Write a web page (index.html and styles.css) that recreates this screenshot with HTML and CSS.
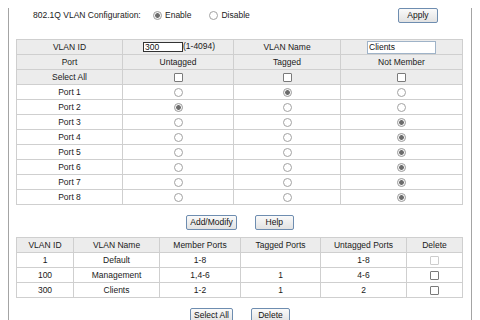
FILE: index.html
```html
<!DOCTYPE html>
<html lang="en">
<head>
    <meta charset="UTF-8">
    <title>802.1Q VLAN</title>
    <link rel="stylesheet" href="styles.css">
</head>
<body>
<div class="frame">
    <div class="config">
        <span class="config__label">802.1Q VLAN Configuration:</span>
        <label class="config__option"><input type="radio" name="mode" checked> Enable</label>
        <label class="config__option"><input type="radio" name="mode"> Disable</label>
        <button class="btn config__apply">Apply</button>
    </div>

    <table class="grid vlan-edit">
        <colgroup>
            <col style="width:106px">
            <col style="width:111px">
            <col style="width:107px">
            <col style="width:122px">
        </colgroup>
        <tr class="head">
            <td>VLAN ID</td>
            <td class="vlan-edit__id"><input class="field field--id" type="text" value="300">(1-4094)</td>
            <td>VLAN Name</td>
            <td><input class="field field--name" type="text" value="Clients"></td>
        </tr>
        <tr class="head">
            <td>Port</td>
            <td>Untagged</td>
            <td>Tagged</td>
            <td>Not Member</td>
        </tr>
        <tr class="head">
            <td>Select All</td>
            <td><input type="checkbox"></td>
            <td><input type="checkbox"></td>
            <td><input type="checkbox"></td>
        </tr>
        <tr><td>Port 1</td><td><input type="radio" name="p1"></td><td><input type="radio" name="p1" checked></td><td><input type="radio" name="p1"></td></tr>
        <tr><td>Port 2</td><td><input type="radio" name="p2" checked></td><td><input type="radio" name="p2"></td><td><input type="radio" name="p2"></td></tr>
        <tr><td>Port 3</td><td><input type="radio" name="p3"></td><td><input type="radio" name="p3"></td><td><input type="radio" name="p3" checked></td></tr>
        <tr><td>Port 4</td><td><input type="radio" name="p4"></td><td><input type="radio" name="p4"></td><td><input type="radio" name="p4" checked></td></tr>
        <tr><td>Port 5</td><td><input type="radio" name="p5"></td><td><input type="radio" name="p5"></td><td><input type="radio" name="p5" checked></td></tr>
        <tr><td>Port 6</td><td><input type="radio" name="p6"></td><td><input type="radio" name="p6"></td><td><input type="radio" name="p6" checked></td></tr>
        <tr><td>Port 7</td><td><input type="radio" name="p7"></td><td><input type="radio" name="p7"></td><td><input type="radio" name="p7" checked></td></tr>
        <tr><td>Port 8</td><td><input type="radio" name="p8"></td><td><input type="radio" name="p8"></td><td><input type="radio" name="p8" checked></td></tr>
    </table>

    <div class="actions actions--edit">
        <button class="btn">Add/Modify</button>
        <button class="btn">Help</button>
    </div>

    <table class="grid vlan-list">
        <colgroup>
            <col style="width:57px">
            <col style="width:86px">
            <col style="width:81px">
            <col style="width:80px">
            <col style="width:86px">
            <col style="width:56px">
        </colgroup>
        <tr class="head">
            <td>VLAN ID</td>
            <td>VLAN Name</td>
            <td>Member Ports</td>
            <td>Tagged Ports</td>
            <td>Untagged Ports</td>
            <td>Delete</td>
        </tr>
        <tr><td>1</td><td>Default</td><td>1-8</td><td></td><td>1-8</td><td><input type="checkbox" disabled></td></tr>
        <tr><td>100</td><td>Management</td><td>1,4-6</td><td>1</td><td>4-6</td><td><input type="checkbox"></td></tr>
        <tr><td>300</td><td>Clients</td><td>1-2</td><td>1</td><td>2</td><td><input type="checkbox"></td></tr>
    </table>

    <div class="actions actions--list">
        <button class="btn">Select All</button>
        <button class="btn">Delete</button>
    </div>
</div>
</body>
</html>
```

FILE: styles.css
```css
body, html {
    margin: 0;
    height: 100%;
    background-color: #fff;
    overflow: hidden;
}

body {
    font-family: "Liberation Sans", Arial, sans-serif;
    font-size: 8.5px;
    color: #1a1a1a;
}

.frame {
    box-sizing: border-box;
    width: 464px;
    height: 320px;
    margin-left: 8px;
    border-left: 1px solid #a4a4a4;
    border-right: 1px solid #a4a4a4;
}

/* top line */
.config {
    display: flex;
    align-items: center;
    height: 14px;
    margin-top: 8px;
    padding-left: 24px;
    padding-right: 33px;
}

.config__label {
    width: 120px;
}

.config__option {
    display: flex;
    align-items: center;
    gap: 3px;
    margin-right: 18px;
}

.config__apply {
    margin-left: auto;
    width: 40px;
    height: 14px;
}

/* buttons */
.btn {
    box-sizing: border-box;
    min-width: 39px;
    height: 15px;
    padding: 0 3px;
    font-family: inherit;
    font-size: 8.5px;
    color: #111;
    background: linear-gradient(#fafafa, #e2e2e2);
    border: 1px solid #6e8db0;
    border-radius: 2px;
    line-height: 1;
}

/* tables */
.grid {
    border-collapse: collapse;
    table-layout: fixed;
    width: 446px;
    margin-left: 7px;
}

.grid td {
    height: 14px;
    padding: 0;
    border: 1px solid #cfcfcf;
    text-align: center;
    line-height: 1;
    white-space: nowrap;
}

.grid tr.head td {
    background-color: #ececec;
}

.vlan-edit {
    margin-top: 17px;
}

.vlan-edit__id.vlan-edit__id {
    text-align: left;
    padding-left: 20px;
}

.vlan-list {
    margin-top: 8px;
}

.field {
    box-sizing: border-box;
    margin: 0;
    padding: 0 1px;
    font-family: inherit;
    font-size: 8.5px;
    color: #111;
    background: #fff;
    vertical-align: middle;
}

.field--id {
    width: 40px;
    height: 10px;
    border: 1px solid #333;
}

.field--name {
    width: 69px;
    height: 13px;
    border: 1px solid #9fb3c8;
}

/* radios and checkboxes */
input[type="radio"],
input[type="checkbox"] {
    appearance: none;
    -webkit-appearance: none;
    box-sizing: border-box;
    width: 9px;
    height: 9px;
    margin: 0;
    background: #fff;
    vertical-align: middle;
}

input[type="radio"] {
    border: 1px solid #a2a2a2;
    border-radius: 50%;
}

input[type="radio"]:checked {
    border-color: #9a9a9a;
    background: radial-gradient(circle, #6c6c6c 0 2px, #e6e6e6 2.6px, #fff 3.4px);
}

input[type="checkbox"] {
    border: 1px solid #7a7a7a;
    border-radius: 1px;
}

input[type="checkbox"]:disabled {
    border-color: #cdcdcd;
}

/* button rows */
.actions {
    display: flex;
    justify-content: center;
    gap: 18px;
}

.actions--edit {
    margin-top: 10px;
}

.actions--list {
    margin-top: 10px;
}

.vlan-list {
    margin-top: 7px;
}
```
